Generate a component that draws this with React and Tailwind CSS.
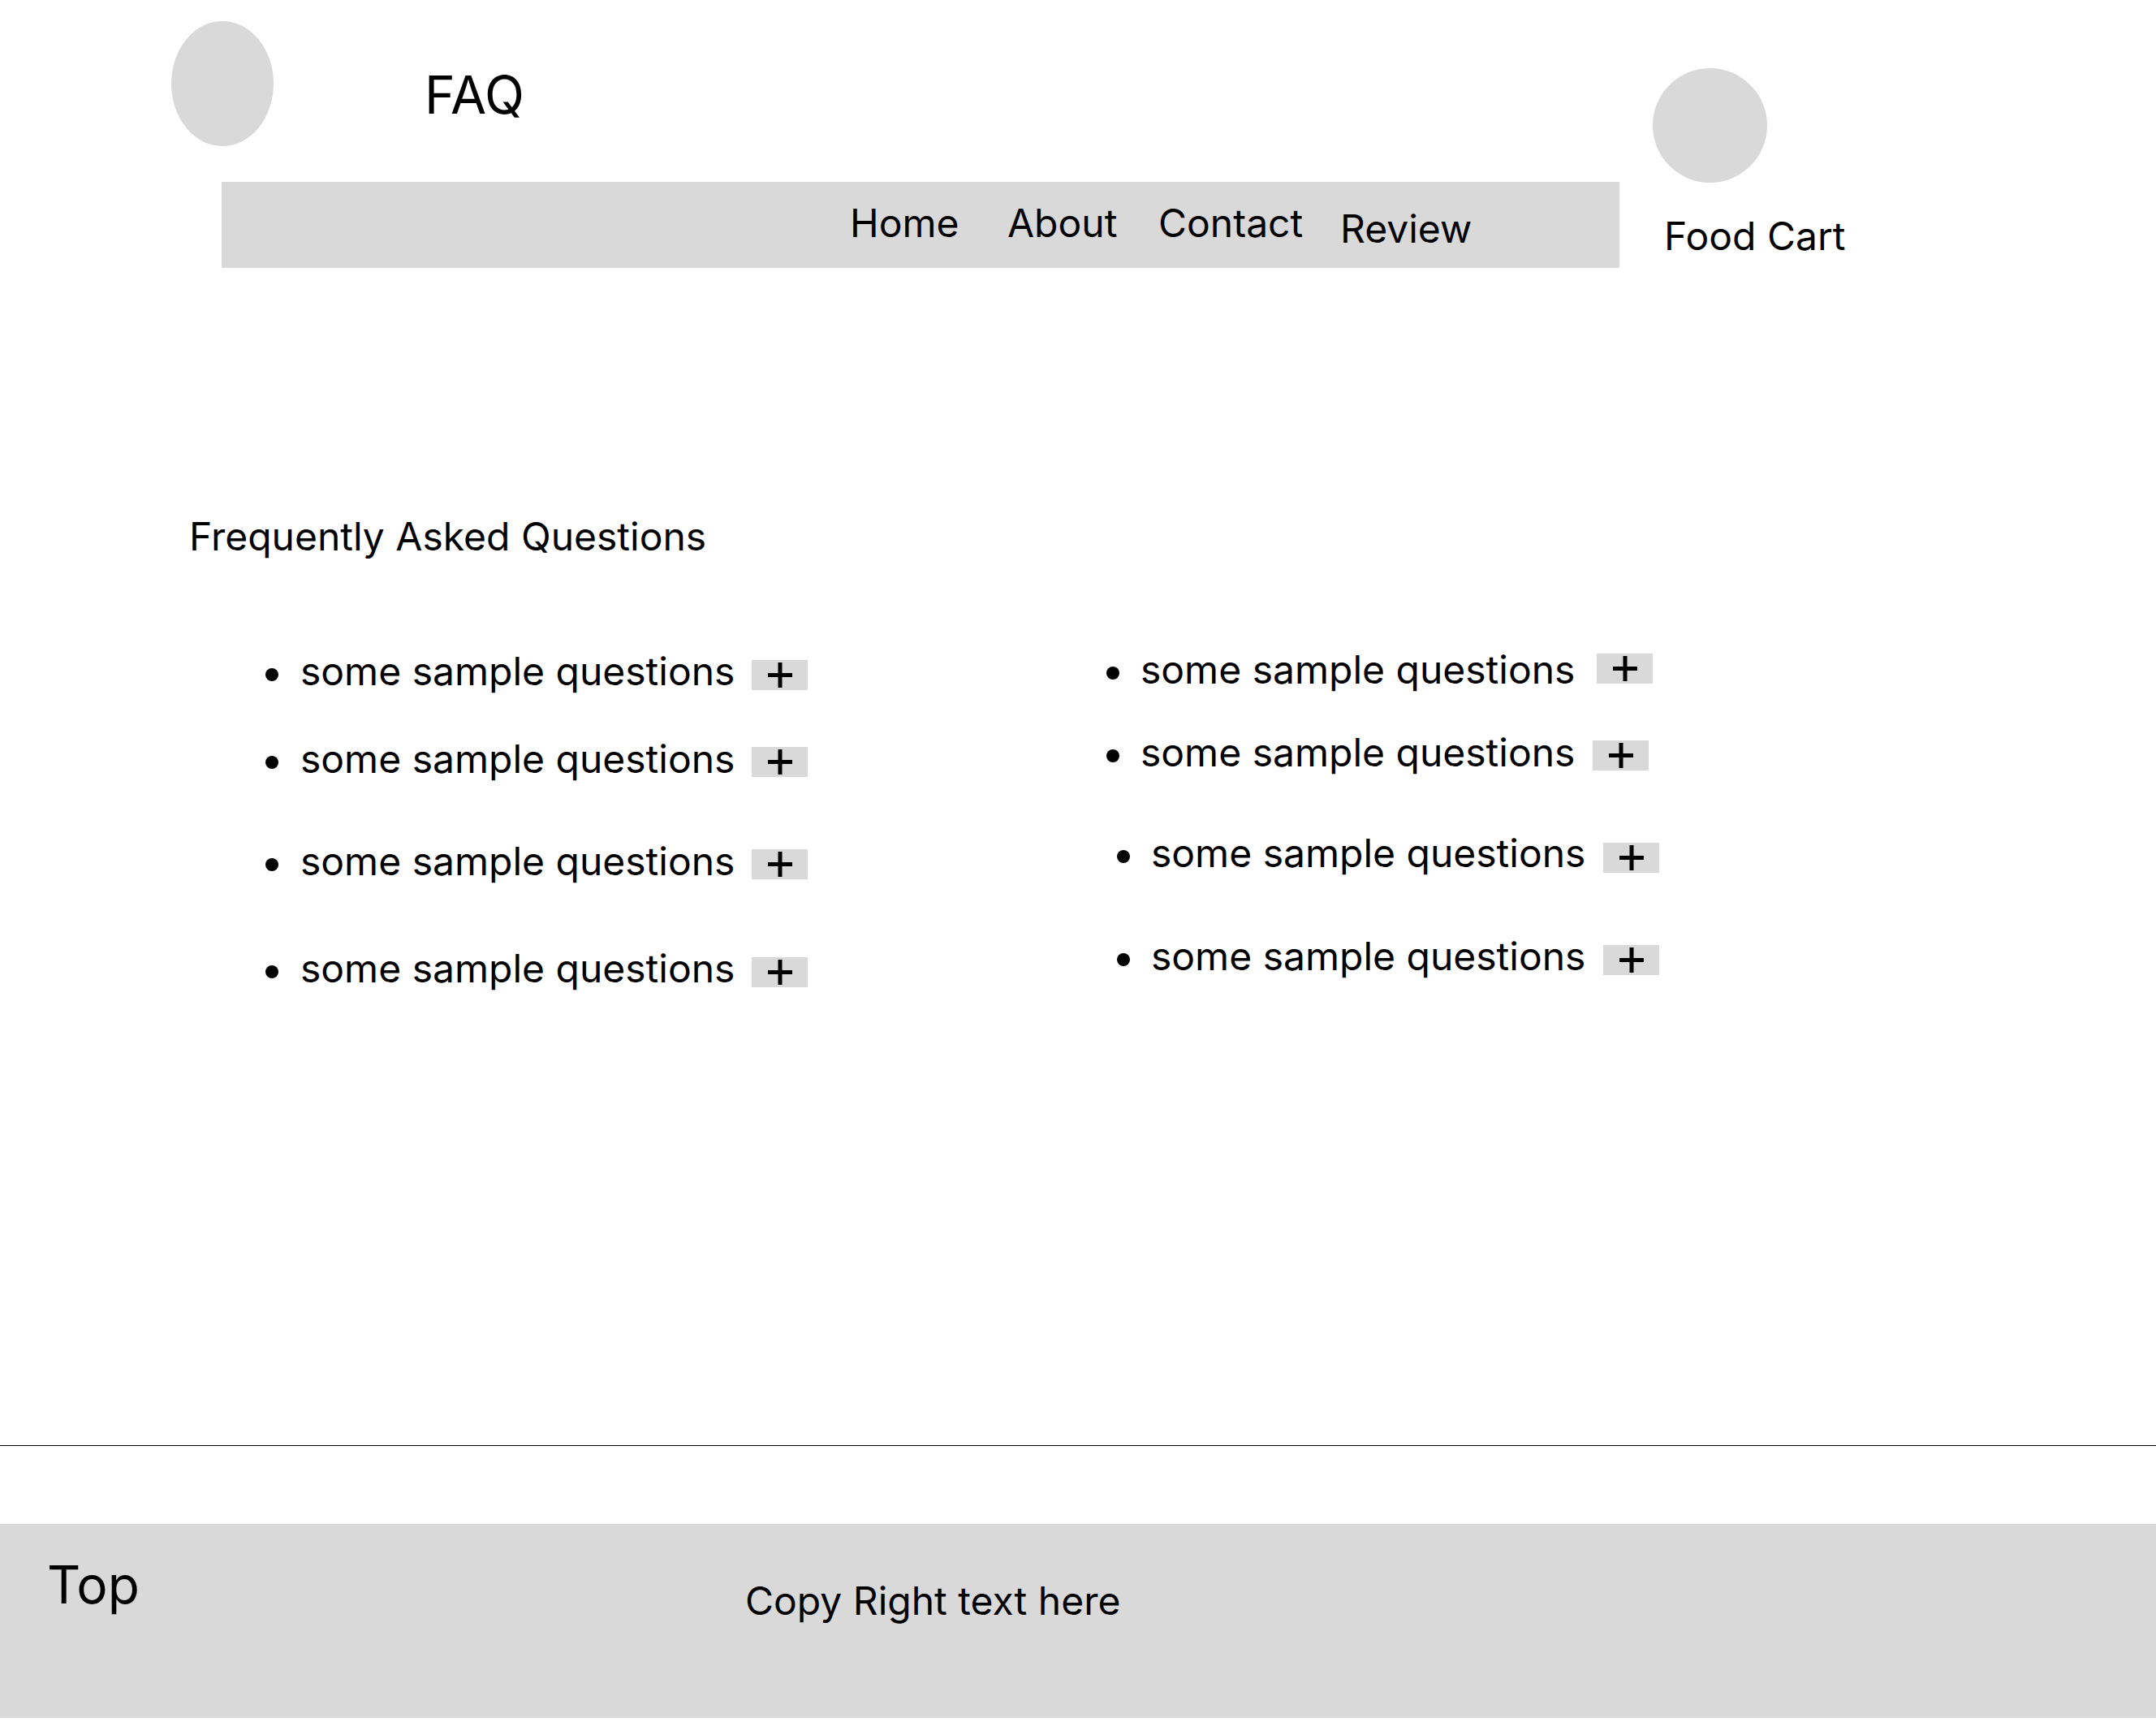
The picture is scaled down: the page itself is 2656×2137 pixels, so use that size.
import React from "react";

function Plus() {
  return (
    <svg width="30" height="31" viewBox="0 0 30 31">
      <rect x="12.5" y="0" width="5" height="31" fill="#000" />
      <rect x="0" y="13" width="30" height="5" fill="#000" />
    </svg>
  );
}

function Row({ rowCls, dotCls, textCls, boxCls }) {
  return (
    <div className={"flex items-start h-[48px] " + rowCls}>
      <div className={"w-[16px] h-[16px] rounded-full bg-black mt-[20px] flex-none " + dotCls} />
      <div className={"text-[48px] leading-none whitespace-nowrap flex-none " + textCls}>
        some sample questions
      </div>
      <div className={"w-[69px] h-[37px] bg-[#d9d9d9] flex items-center justify-center flex-none " + boxCls}>
        <Plus />
      </div>
    </div>
  );
}

const leftRows = [
  { rowCls: "mt-0", dotCls: "ml-0", textCls: "ml-[27px] w-[556px]", boxCls: "mt-[10px]" },
  { rowCls: "mt-[60px]", dotCls: "ml-0", textCls: "ml-[27px] w-[556px]", boxCls: "mt-[9px]" },
  { rowCls: "mt-[78px]", dotCls: "ml-0", textCls: "ml-[27px] w-[556px]", boxCls: "mt-[9px]" },
  { rowCls: "mt-[84px]", dotCls: "ml-0", textCls: "ml-[27px] w-[556px]", boxCls: "mt-[10px]" },
];

const rightRows = [
  { rowCls: "mt-0", dotCls: "ml-0", textCls: "ml-[26px] w-[562px]", boxCls: "mt-[4px]" },
  { rowCls: "mt-[54px]", dotCls: "ml-0", textCls: "ml-[26px] w-[557px]", boxCls: "mt-[9px]" },
  { rowCls: "mt-[76px]", dotCls: "ml-[13px]", textCls: "ml-[26px] w-[557px]", boxCls: "mt-[11px]" },
  { rowCls: "mt-[79px]", dotCls: "ml-[13px]", textCls: "ml-[26px] w-[557px]", boxCls: "mt-[10px]" },
];

export default function App() {
  return (
    <div className="w-[2656px] h-[2137px] bg-white text-black font-['Inter',sans-serif] flex flex-col overflow-hidden">
      {/* Header */}
      <header className="flex h-[330px] flex-none">
        <div className="flex flex-col w-[1995px] flex-none">
          <div className="flex items-start h-[224px]">
            <div className="ml-[211px] mt-[26px] w-[126px] h-[154px] rounded-[50%] bg-[#d9d9d9] flex-none" />
            <div className="ml-[186px] mt-[85px] text-[64px] leading-none">FAQ</div>
          </div>
          <nav className="ml-[273px] w-[1722px] h-[106px] bg-[#d9d9d9] flex items-start pl-[774px] text-[48px] leading-none">
            <span className="w-[194px] mt-[27px] flex-none">Home</span>
            <span className="w-[186px] mt-[27px] flex-none">About</span>
            <span className="w-[224px] mt-[27px] flex-none">Contact</span>
            <span className="mt-[34px] flex-none">Review</span>
          </nav>
        </div>
        <div className="ml-[41px] mt-[84px] flex flex-col items-start">
          <div className="w-[141px] h-[141px] rounded-full bg-[#d9d9d9]" />
          <div className="ml-[14px] mt-[42px] text-[48px] leading-none whitespace-nowrap">Food Cart</div>
        </div>
      </header>

      {/* Main */}
      <main className="h-[1450px] flex-none flex flex-col">
        <h1 className="ml-[233px] mt-[307px] text-[48px] leading-none font-normal">
          Frequently Asked Questions
        </h1>
        <div className="flex items-start mt-[116px]">
          <ul className="ml-[327px] w-[1036px] flex-none flex flex-col mt-[2px]">
            {leftRows.map((r, i) => (
              <li key={i}>
                <Row {...r} />
              </li>
            ))}
          </ul>
          <ul className="flex flex-col">
            {rightRows.map((r, i) => (
              <li key={i}>
                <Row {...r} />
              </li>
            ))}
          </ul>
        </div>
      </main>

      <div className="h-px bg-black flex-none" />
      <div className="h-[96px] flex-none" />

      {/* Footer */}
      <footer className="h-[239px] bg-[#d9d9d9] flex items-start flex-none">
        <div className="ml-[58px] mt-[43px] w-[860px] text-[64px] leading-none flex-none">Top</div>
        <div className="mt-[71px] text-[48px] leading-none whitespace-nowrap">Copy Right text here</div>
      </footer>
    </div>
  );
}
